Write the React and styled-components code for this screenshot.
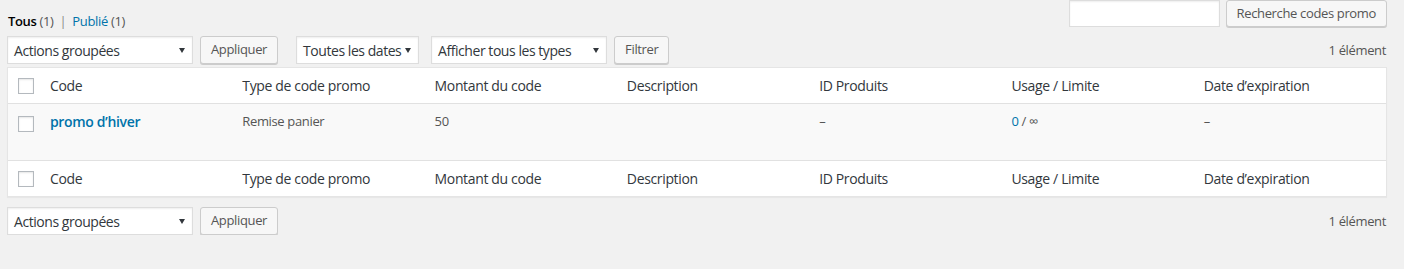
import React from "react";
import styled, { createGlobalStyle } from "styled-components";

const FONT = `"Open Sans", "Noto Sans", "Liberation Sans", sans-serif`;

const GlobalStyle = createGlobalStyle`
  html, body { margin: 0; padding: 0; }
  body {
    background: #f1f1f1;
    font-family: ${FONT};
    font-size: 13px;
    letter-spacing: -0.35px;
    color: #444;
  }
  * { box-sizing: border-box; }
`;

const Wrap = styled.div`
  padding: 0 17px 0 7px;
`;

const TopBar = styled.div`
  display: flex;
  justify-content: space-between;
  align-items: flex-start;
  height: 34px;
`;

const SubSubSub = styled.ul`
  list-style: none;
  margin: 8px 0 0 1px;
  padding: 0;
  display: flex;
  font-size: 13px;
  line-height: 26px;
  color: #666;
`;

const SubItem = styled.li`
  display: flex;
`;

const SubLink = styled.a`
  color: ${(p) => (p.$current ? "#000" : "#0073aa")};
  font-weight: ${(p) => (p.$current ? 600 : 400)};
  text-decoration: none;
`;

const Count = styled.span`
  color: #555;
  font-weight: 400;
`;

const Sep = styled.span`
  margin: 0 6px 0 6px;
  color: #888;
`;

const SearchBox = styled.div`
  display: flex;
  gap: 6px;
  align-items: flex-start;
`;

const SearchInput = styled.input`
  width: 151px;
  height: 27px;
  margin: 0;
  border: 1px solid #ddd;
  background: #fff;
  box-shadow: inset 0 1px 2px rgba(0, 0, 0, 0.07);
  font-family: ${FONT};
  font-size: 14px;
  outline: none;
`;

const Button = styled.button`
  height: ${(p) => p.$h || 28}px;
  padding: 0 10px 1px;
  margin: 0;
  border: 1px solid #ccc;
  border-radius: 3px;
  background: #f7f7f7;
  box-shadow: 0 1px 0 #ccc;
  color: #555;
  font-family: ${FONT};
  font-size: 13px;
  letter-spacing: -0.35px;
  line-height: 1;
  white-space: nowrap;
  cursor: pointer;
`;

const TableNav = styled.div`
  display: flex;
  align-items: center;
  height: 28px;
  margin-top: ${(p) => p.$top}px;
`;

const Actions = styled.div`
  display: flex;
  align-items: center;
  gap: 7px;
  margin-left: ${(p) => p.$ml || 0}px;
`;

const Select = styled.div`
  position: relative;
  display: flex;
  align-items: center;
  width: ${(p) => p.$w}px;
  height: 28px;
  padding-left: ${(p) => p.$pl || 6}px;
  background: #fff;
  border: 1px solid #ddd;
  box-shadow: inset 0 1px 2px rgba(0, 0, 0, 0.07);
  color: #32373c;
  font-size: 14px;
  letter-spacing: -0.45px;
  white-space: nowrap;
  overflow: hidden;
`;

const Arrow = styled.span`
  position: absolute;
  right: 7px;
  top: 11px;
  width: 0;
  height: 0;
  border-left: 3.5px solid transparent;
  border-right: 3.5px solid transparent;
  border-top: 5px solid #32373c;
`;

const DisplayingNum = styled.div`
  margin-left: auto;
  margin-right: 1px;
  color: #555;
  font-size: 13px;
`;

const Table = styled.div`
  margin-top: 3px;
  background: #fff;
  border: 1px solid #e5e5e5;
  box-shadow: 0 1px 1px rgba(0, 0, 0, 0.04);
`;

const Row = styled.div`
  display: grid;
  grid-template-columns: 32px repeat(7, 1fr);
  align-items: ${(p) => (p.$body ? "start" : "center")};
  height: ${(p) => (p.$body ? 56 : 35)}px;
  background: ${(p) => (p.$body ? "#f9f9f9" : "#fff")};
  border-top: ${(p) => (p.$foot ? "1px solid #e1e1e1" : "none")};
  border-bottom: ${(p) => (p.$head ? "1px solid #e1e1e1" : "none")};
  box-sizing: content-box;
`;

const CheckCell = styled.div`
  display: flex;
  padding-left: 10px;
  padding-top: ${(p) => (p.$body ? 12 : 0)}px;
`;

const Checkbox = styled.span`
  display: block;
  width: 16px;
  height: 16px;
  border: 1px solid #b4b9be;
  background: #fff;
  box-shadow: inset 0 1px 2px rgba(0, 0, 0, 0.1);
`;

const Th = styled.div`
  padding-left: 10px;
  color: #32373c;
  font-size: 14px;
  white-space: nowrap;
`;

const Td = styled.div`
  padding: 8px 10px 0;
  color: #555;
  font-size: 13px;
  line-height: 19.5px;
  white-space: nowrap;
`;

const RowTitle = styled.a`
  color: #0073aa;
  font-size: 14px;
  font-weight: 600;
  text-decoration: none;
`;

const Link = styled.a`
  color: #0073aa;
  text-decoration: none;
`;

const Muted = styled.span`
  color: #555;
`;

const columns = [
  "Code",
  "Type de code promo",
  "Montant du code",
  "Description",
  "ID Produits",
  "Usage / Limite",
  "Date d’expiration",
];

const HeaderRow = ({ foot }) => (
  <Row $head={!foot} $foot={foot}>
    <CheckCell>
      <Checkbox />
    </CheckCell>
    {columns.map((c) => (
      <Th key={c}>{c}</Th>
    ))}
  </Row>
);

const BulkActions = () => (
  <Actions>
    <Select $w={186} $pl={6}>
      Actions groupées
      <Arrow />
    </Select>
    <Button>Appliquer</Button>
  </Actions>
);

export default function App() {
  return (
    <>
      <GlobalStyle />
      <Wrap>
        <TopBar>
          <SubSubSub>
            <SubItem>
              <SubLink $current>
                Tous <Count>(1)</Count>
              </SubLink>
              <Sep>|</Sep>
            </SubItem>
            <SubItem>
              <SubLink>
                Publié <Count>(1)</Count>
              </SubLink>
            </SubItem>
          </SubSubSub>
          <SearchBox>
            <SearchInput type="search" />
            <Button $h={27}>Recherche codes promo</Button>
          </SearchBox>
        </TopBar>

        <TableNav $top={2}>
          <BulkActions />
          <Actions $ml={18}>
            <Select $w={123} $pl={6}>
              Toutes les dates
              <Arrow />
            </Select>
            <Actions $ml={5}>
              <Select $w={176} $pl={6}>
                Afficher tous les types
                <Arrow />
              </Select>
              <Button>Filtrer</Button>
            </Actions>
          </Actions>
          <DisplayingNum>1 élément</DisplayingNum>
        </TableNav>

        <Table>
          <HeaderRow />
          <Row $body>
            <CheckCell $body>
              <Checkbox />
            </CheckCell>
            <Td>
              <RowTitle>promo d’hiver</RowTitle>
            </Td>
            <Td>Remise panier</Td>
            <Td>50</Td>
            <Td></Td>
            <Td>–</Td>
            <Td>
              <Link>0</Link>
              <Muted> / ∞</Muted>
            </Td>
            <Td>–</Td>
          </Row>
          <HeaderRow foot />
        </Table>

        <TableNav $top={10}>
          <BulkActions />
          <DisplayingNum>1 élément</DisplayingNum>
        </TableNav>
      </Wrap>
    </>
  );
}
